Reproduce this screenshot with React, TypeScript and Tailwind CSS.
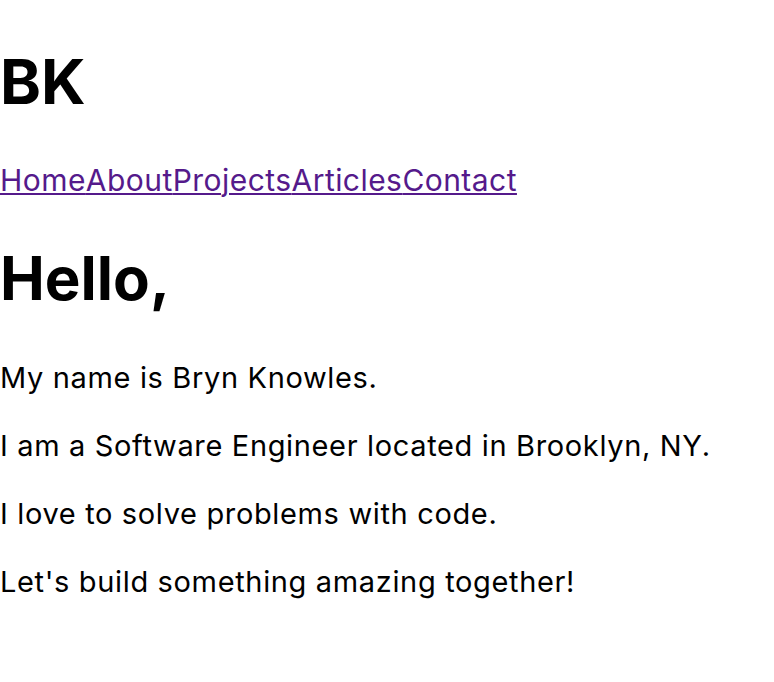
import React from 'react';

const links = ['Home', 'About', 'Projects', 'Articles', 'Contact'];

const lines = [
    'My name is Bryn Knowles.',
    'I am a Software Engineer located in Brooklyn, NY.',
    'I love to solve problems with code.',
    "Let's build something amazing together!",
];

export default function App() {
    return (
        <div className="min-h-screen bg-white text-black font-['Inter',sans-serif] pt-[46px]">
            <header>
                <h1 className="text-[62px] leading-[72px] font-bold">BK</h1>
                <nav className="mt-[44px] flex text-[30px] leading-[36px] tracking-[0.45px]">
                    {links.map(link => (
                        <a key={link} href="#" className="text-[#551a8b] underline decoration-2 underline-offset-2">
                            {link}
                        </a>
                    ))}
                </nav>
            </header>
            <main className="mt-[44px]">
                <h1 className="text-[60px] leading-[72px] font-bold">Hello,</h1>
                <div className="mt-[47px] flex flex-col gap-[34px]">
                    {lines.map(line => (
                        <p key={line} className="text-[29px] leading-[34px] tracking-[0.65px]">{line}</p>
                    ))}
                </div>
            </main>
        </div>
    );
}
